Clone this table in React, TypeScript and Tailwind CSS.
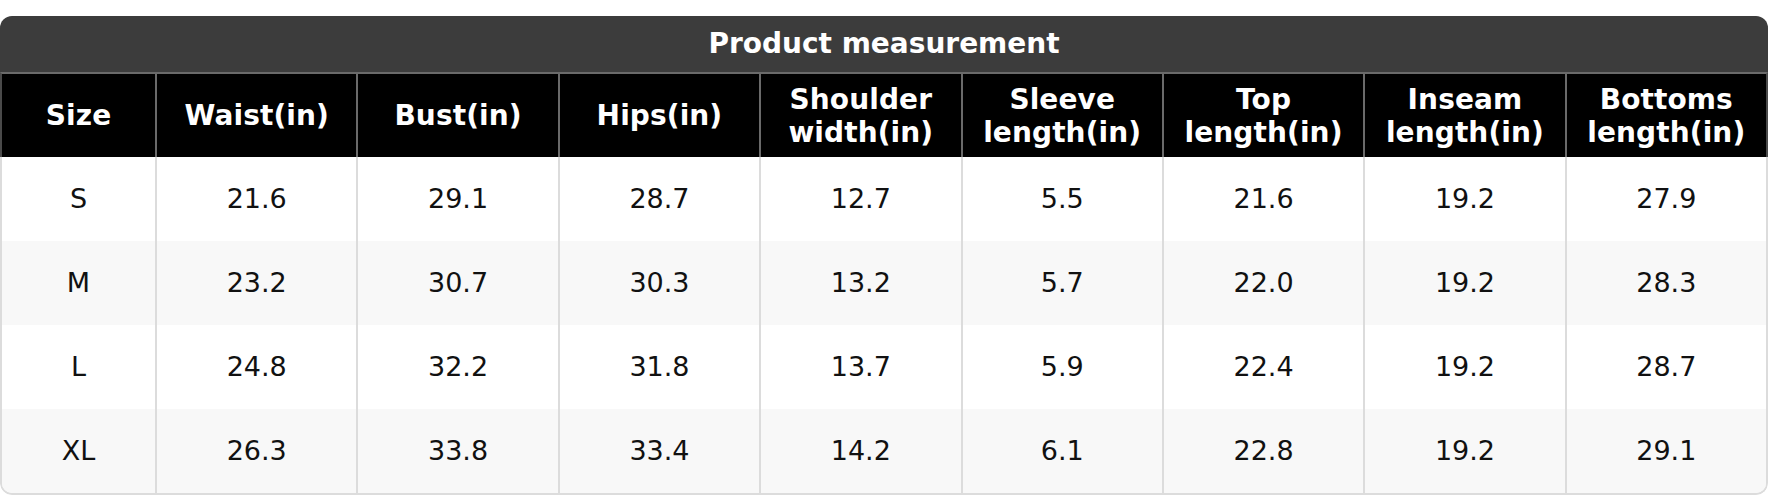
const headers = [
  ['Size'],
  ['Waist(in)'],
  ['Bust(in)'],
  ['Hips(in)'],
  ['Shoulder', 'width(in)'],
  ['Sleeve', 'length(in)'],
  ['Top', 'length(in)'],
  ['Inseam', 'length(in)'],
  ['Bottoms', 'length(in)'],
];

const rows = [
  ['S', '21.6', '29.1', '28.7', '12.7', '5.5', '21.6', '19.2', '27.9'],
  ['M', '23.2', '30.7', '30.3', '13.2', '5.7', '22.0', '19.2', '28.3'],
  ['L', '24.8', '32.2', '31.8', '13.7', '5.9', '22.4', '19.2', '28.7'],
  ['XL', '26.3', '33.8', '33.4', '14.2', '6.1', '22.8', '19.2', '29.1'],
];

export default function App() {
  return (
    <div className="bg-white pt-4 pb-[1px]" style={{ fontFamily: '"DejaVu Sans", sans-serif' }}>
      <div className="w-[1768px] overflow-hidden rounded-[12px]">
        {/* title bar */}
        <div className="flex h-[56px] items-center justify-center bg-[#3c3c3c] text-[28px] font-bold text-white">
          Product measurement
        </div>

        {/* column headers */}
        <div className="grid h-[85px] grid-cols-[153px_repeat(8,minmax(0,1fr))] border-x-2 border-t-2 border-x-[#4a4a4a] border-t-[#6a6a6a] bg-black">
          {headers.map((lines, i) => (
            <div
              key={i}
              className={`flex flex-col items-center justify-center text-center text-[28px] leading-[33px] font-bold tracking-[0.1px] text-white ${i > 0 ? 'border-l-2 border-[#6a6a6a]' : ''}`}
            >
              {lines.map((l) => (
                <span key={l}>{l}</span>
              ))}
            </div>
          ))}
        </div>

        {/* body */}
        <div className="overflow-hidden rounded-b-[12px] border-x-2 border-b-2 border-[#dcdcdc]">
          {rows.map((r, ri) => (
            <div
              key={ri}
              className={`grid h-[84px] grid-cols-[153px_repeat(8,minmax(0,1fr))] ${ri % 2 === 1 ? 'bg-[#f8f8f8]' : 'bg-white'}`}
            >
              {r.map((v, ci) => (
                <div
                  key={ci}
                  className={`flex items-center justify-center text-[27px] text-[#111] ${ci > 0 ? 'border-l-2 border-[#dcdcdc]' : ''}`}
                >
                  {v}
                </div>
              ))}
            </div>
          ))}
        </div>
      </div>
    </div>
  );
}
